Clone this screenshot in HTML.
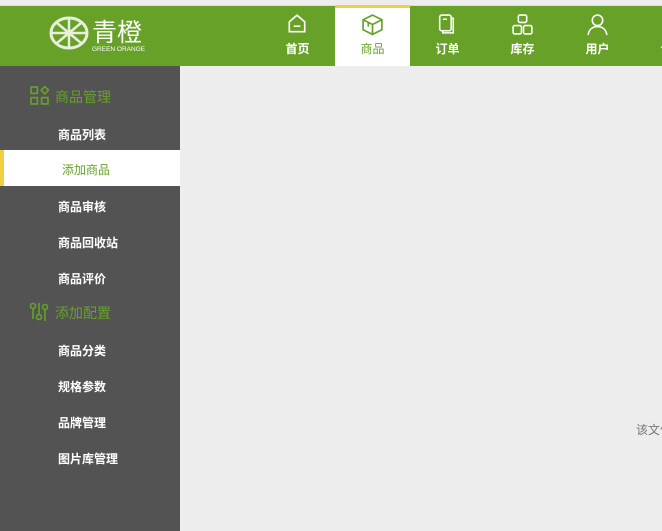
<!DOCTYPE html>
<html><head><meta charset="utf-8"><style>
*{margin:0;padding:0;box-sizing:border-box}
body{width:662px;height:531px;overflow:hidden;background:#ededed;font-family:"Liberation Sans","Noto Sans CJK SC",sans-serif;position:relative}
.top{position:absolute;left:0;top:5px;width:662px;height:61px;background:#67a128;border-top:1px solid #ddd}
.nav{position:absolute;top:0;width:75px;height:60px;color:#fff;font-size:12px;text-align:center;font-weight:bold}
.nav svg{position:absolute;left:26px;top:7px}
.nav span{position:absolute;left:0;width:75px;top:34px}
.nav.act{background:#fff;color:#67a128;border-top:3px solid #f0d040;top:-1px;height:61px;font-weight:normal}
.nav.act svg{top:5px}.nav.act span{top:32px}
.side{position:absolute;left:0;top:66px;width:180px;height:465px;background:#535353}
.g{position:absolute;left:55px;color:#67a128;font-size:14px}
.it{position:absolute;left:58px;color:#fff;font-size:12px;font-weight:bold}
.on{position:absolute;left:0;top:84px;width:180px;height:36px;background:#fff;border-left:4px solid #f0d040;color:#67a128;font-size:12px;padding:13px 0 0 58px;line-height:14px}
</style></head><body>
<div class="top">
 <svg style="position:absolute;left:48px;top:8px" width="100" height="42" viewBox="0 0 100 42">
  <ellipse cx="21" cy="19" rx="18" ry="15" fill="none" stroke="#e8f0dc" stroke-width="3"/>
  <path d="M21 5V33M4 19H38M9 9L33 29M33 9L9 29" stroke="#e8f0dc" stroke-width="2.5"/>
  <text x="44" y="27" fill="#fff" font-size="25" font-family="Noto Sans CJK SC,sans-serif">青橙</text>
  <text x="44" y="37" fill="#fff" font-size="6.5" font-family="Liberation Sans">GREEN ORANGE</text>
 </svg>
 <div class="nav" style="left:260px"><svg width="22" height="22" viewBox="0 0 20 20" fill="none" stroke="#fff" stroke-width="1.5"><path d="M3 8L10 2L17 8V17H3Z"/><path d="M7 12H13"/></svg><span>首页</span></div>
 <div class="nav act" style="left:335px"><svg width="23" height="23" viewBox="0 0 22 22" fill="none" stroke="#67a128" stroke-width="1.6"><path d="M11 2L20 6.5V16L11 20.5L2 16V6.5Z"/><path d="M2 6.5L11 11L20 6.5M11 11V20.5M7 9V13"/></svg><span>商品</span></div>
 <div class="nav" style="left:410px"><svg width="22" height="23" viewBox="0 0 20 22" fill="none" stroke="#fff" stroke-width="1.5"><rect x="3" y="2" width="11" height="15" rx="2"/><path d="M14 5H16V19H6V17M6 6H10"/></svg><span>订单</span></div>
 <div class="nav" style="left:485px"><svg width="23" height="23" viewBox="0 0 22 22" fill="none" stroke="#fff" stroke-width="1.5"><rect x="7" y="2" width="8" height="7" rx="1.5"/><rect x="2" y="12" width="8" height="8" rx="1.5"/><rect x="12" y="12" width="8" height="8" rx="1.5"/></svg><span>库存</span></div>
 <div class="nav" style="left:560px"><svg width="23" height="23" viewBox="0 0 22 22" fill="none" stroke="#fff" stroke-width="1.5"><circle cx="11" cy="7" r="5"/><path d="M2 21C3 15 7 13 11 13S19 15 20 21"/></svg><span>用户</span></div>
 <div class="nav" style="left:635px"><span>设置</span></div>
</div>
<div class="side">
 <svg style="position:absolute;left:30px;top:20px" width="19" height="19" viewBox="0 0 18 18" fill="none" stroke="#67a128" stroke-width="1.6"><rect x="1" y="1" width="6" height="6"/><rect x="1" y="11" width="6" height="6"/><rect x="11" y="11" width="6" height="6"/><path d="M14 0.5L17.5 4L14 7.5L10.5 4Z"/></svg>
 <div class="g" style="top:21px">商品管理</div>
 <div class="it" style="top:60px">商品列表</div>
 <div class="on">添加商品</div>
 <div class="it" style="top:132px">商品审核</div>
 <div class="it" style="top:168px">商品回收站</div>
 <div class="it" style="top:204px">商品评价</div>
 <svg style="position:absolute;left:29px;top:236px" width="20" height="20" viewBox="0 0 20 20" fill="none" stroke="#67a128" stroke-width="1.6"><circle cx="4" cy="4" r="2.5"/><path d="M4 7V17"/><path d="M10 1V12"/><circle cx="10" cy="15" r="2.5"/><circle cx="16" cy="5" r="2.5"/><path d="M16 8V19"/></svg>
 <div class="g" style="top:237px">添加配置</div>
 <div class="it" style="top:276px">商品分类</div>
 <div class="it" style="top:312px">规格参数</div>
 <div class="it" style="top:348px">品牌管理</div>
 <div class="it" style="top:384px">图片库管理</div>
</div>
<div style="position:absolute;left:636px;top:421px;font-size:12px;color:#777;white-space:nowrap">该文件</div>
</body></html>
